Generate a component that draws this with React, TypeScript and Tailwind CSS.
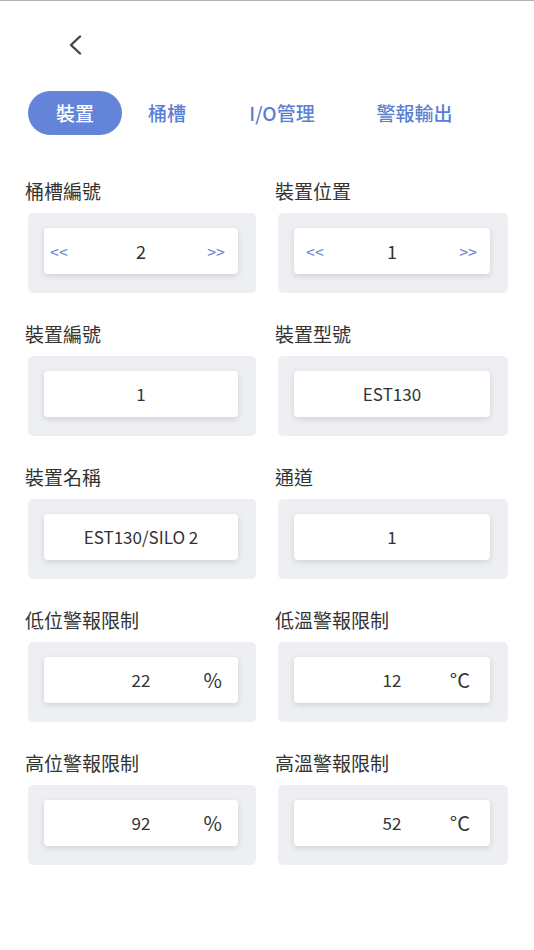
import { useState } from 'react';

type Field =
  | { label: string; kind: 'stepper'; value: string; padL: string; padR: string }
  | { label: string; kind: 'text'; value: string }
  | { label: string; kind: 'unit'; value: string; unit: string; unitPad: string };

const tabs = [
  { name: '裝置', width: 'w-[94px]' },
  { name: '桶槽', width: 'w-[90px]' },
  { name: 'I/O管理', width: 'w-[140px]' },
  { name: '警報輸出', width: 'w-[125px]' },
];

const fields: Field[] = [
  { label: '桶槽編號', kind: 'stepper', value: '2', padL: 'pl-[6px]', padR: 'pr-[13px]' },
  { label: '裝置位置', kind: 'stepper', value: '1', padL: 'pl-[12px]', padR: 'pr-[13px]' },
  { label: '裝置編號', kind: 'text', value: '1' },
  { label: '裝置型號', kind: 'text', value: 'EST130' },
  { label: '裝置名稱', kind: 'text', value: 'EST130/SILO 2' },
  { label: '通道', kind: 'text', value: '1' },
  { label: '低位警報限制', kind: 'unit', value: '22', unit: '%', unitPad: 'pr-[16px]' },
  { label: '低溫警報限制', kind: 'unit', value: '12', unit: '°C', unitPad: 'pr-[20px]' },
  { label: '高位警報限制', kind: 'unit', value: '92', unit: '%', unitPad: 'pr-[16px]' },
  { label: '高溫警報限制', kind: 'unit', value: '52', unit: '°C', unitPad: 'pr-[20px]' },
];

const FieldBox = ({ field }: { field: Field }) => {
  let inner;
  if (field.kind === 'stepper') {
    inner = (
      <div className={`relative flex h-full items-center justify-between ${field.padL} ${field.padR}`}>
        <span className="text-[16px] text-[#6a89d5]">&lt;&lt;</span>
        <span className="absolute inset-0 flex items-center justify-center text-[18px] text-[#333]">
          {field.value}
        </span>
        <span className="text-[16px] text-[#6a89d5]">&gt;&gt;</span>
      </div>
    );
  } else if (field.kind === 'unit') {
    inner = (
      <div className={`relative flex h-full items-center justify-end ${field.unitPad}`}>
        <span className="absolute inset-0 flex items-center justify-center text-[17px] text-[#333]">
          {field.value}
        </span>
        <span className="text-[20px] text-[#333]">{field.unit}</span>
      </div>
    );
  } else {
    inner = (
      <div className="flex h-full items-center justify-center text-[17px] text-[#333]">
        {field.value}
      </div>
    );
  }

  return (
    <div>
      <div className="-ml-[3px] h-[26px] text-[19px] leading-[26px] text-[#333]">{field.label}</div>
      <div className="mt-[9px] h-[80px] rounded-[5px] bg-[#eeeff3] pt-[15px] pb-[19px] pl-[16px] pr-[18px]">
        <div className="h-[46px] rounded-[4px] bg-white shadow-[0_2px_6px_rgba(0,0,0,0.13)]">
          {inner}
        </div>
      </div>
    </div>
  );
};

export default function App() {
  const [active, setActive] = useState(0);

  return (
    <div className="min-h-[950px] w-[534px] bg-white font-['Noto_Sans_CJK_TC',sans-serif]">
      <div className="h-px bg-[#b3b3b3]" />

      {/* back arrow */}
      <div className="pt-[34px] pl-[68px]">
        <svg width="14" height="20" viewBox="0 0 14 20" fill="none">
          <path d="M12 1.5 L3 10 L12 18.5" stroke="#444" strokeWidth="2.4" strokeLinecap="round" strokeLinejoin="round" />
        </svg>
      </div>

      {/* tabs */}
      <div className="mt-[36px] flex pl-[28px]">
        {tabs.map((t, i) => (
          <button
            key={t.name}
            onClick={() => setActive(i)}
            className={`${t.width} h-[44px] shrink-0 rounded-full text-center text-[19px] font-medium ${
              active === i ? 'bg-[#6384d9] text-white' : 'text-[#5a7fd2]'
            }`}
          >
            {t.name}
          </button>
        ))}
      </div>

      {/* settings grid */}
      <div className="mt-[43px] grid grid-cols-[228px_230px] gap-x-[22px] gap-y-[28px] pl-[28px]">
        {fields.map((f) => (
          <FieldBox key={f.label} field={f} />
        ))}
      </div>
    </div>
  );
}
